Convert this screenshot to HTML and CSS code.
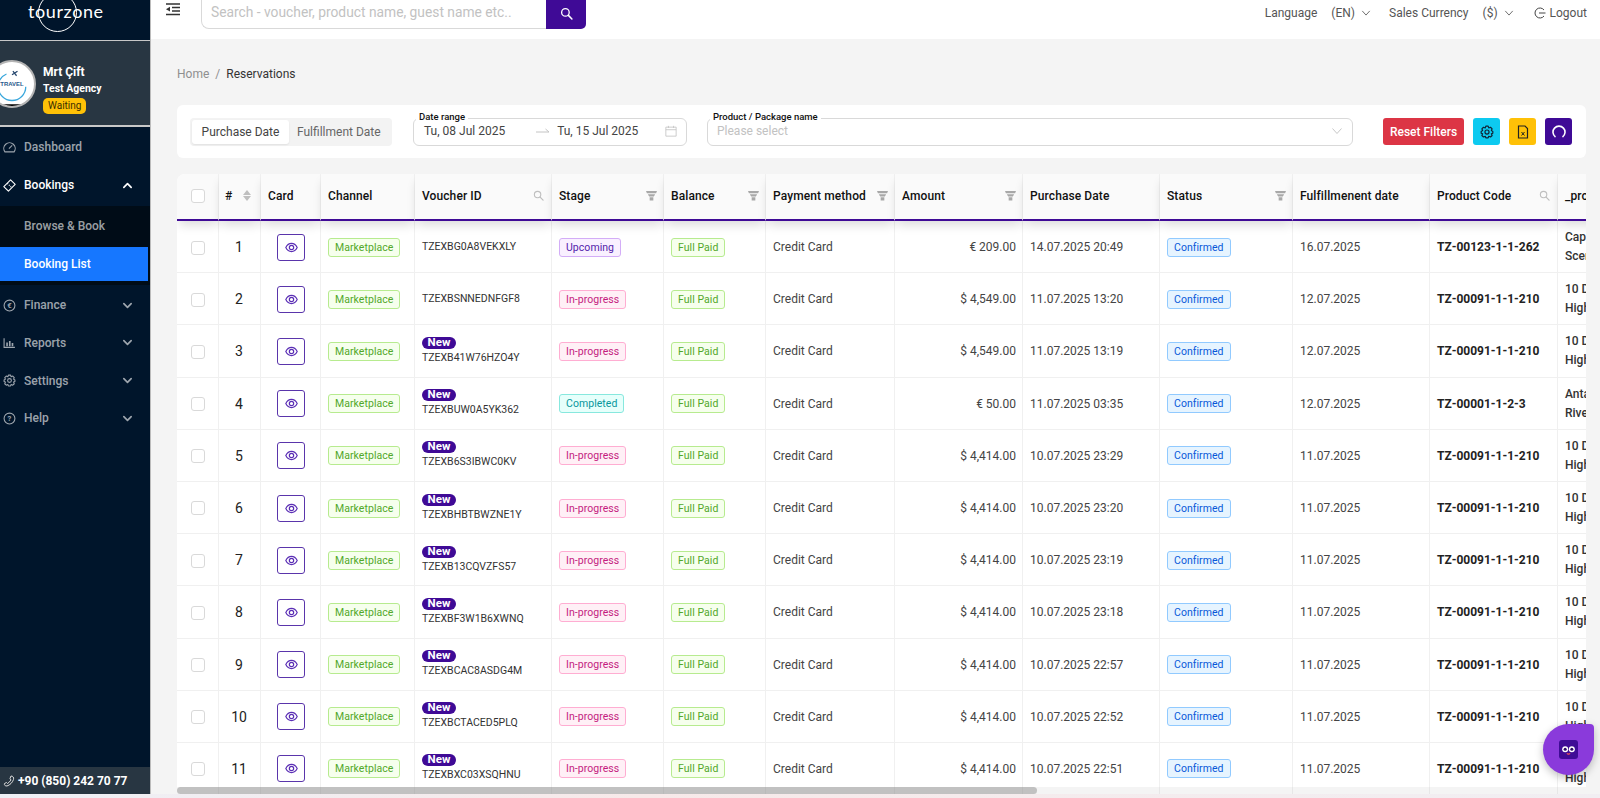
FILE: index.html
```html
<!DOCTYPE html>
<html lang="en">
<head>
<meta charset="utf-8">
<title>Reservations</title>
<link rel="stylesheet" href="styles.css">
</head>
<body>
<svg class="defs" width="0" height="0" aria-hidden="true">
  <symbol id="eye" viewBox="0 0 24 24"><path d="M1.5 12C4 7 8 4.5 12 4.5S20 7 22.5 12C20 17 16 19.5 12 19.5S4 17 1.5 12Z" fill="none" stroke="currentColor" stroke-width="2.2"/><circle cx="12" cy="12" r="4" fill="none" stroke="currentColor" stroke-width="2.2"/></symbol>
  <symbol id="funnel" viewBox="0 0 12 12"><path d="M0 1H12L11 3.6H1ZM2 4.6H10L8.6 7.2H3.4Z" fill="currentColor"/><path d="M4 8H8V11.5H4Z" fill="currentColor"/></symbol>
  <symbol id="lens" viewBox="0 0 24 24"><circle cx="10" cy="10" r="7" fill="none" stroke="currentColor" stroke-width="2.4"/><path d="M15.5 15.5L22 22" stroke="currentColor" stroke-width="2.8" stroke-linecap="round"/></symbol>
  <symbol id="chev" viewBox="0 0 12 12"><path d="M2 4L6 8L10 4" fill="none" stroke="currentColor" stroke-width="1.8" stroke-linecap="round" stroke-linejoin="round"/></symbol>
  <symbol id="chevthin" viewBox="0 0 12 12"><path d="M1.5 3.5L6 8.5L10.5 3.5" fill="none" stroke="currentColor" stroke-width="1"/></symbol>
  <symbol id="gear" viewBox="0 0 24 24"><path d="M10 2H14L15 5L18 3.8L20.8 6.6L19.5 9.5L22 11V14L19.5 15L20.8 18L18 20.6L15 19.3L14 22H10L9 19.3L6 20.6L3.2 18L4.5 15L2 14V11L4.5 9.5L3.2 6.6L6 3.8L9 5Z" fill="none" stroke="currentColor" stroke-width="2" stroke-linejoin="round"/><circle cx="12" cy="12" r="3.5" fill="none" stroke="currentColor" stroke-width="2"/></symbol>
</svg>

<div class="app">
  <aside class="sidebar">
    <div class="logo">
      <span class="logo-text">tourzone</span>
      <span class="logo-ring"></span>
    </div>
    <div class="profile">
      <div class="avatar">
        <svg viewBox="0 0 48 48" width="44" height="44">
          <path d="M25 10L29 15M30 10L24 14" stroke="#26476e" stroke-width="1.4"/>
          <path d="M9 27A15 15 0 0 0 39 27" fill="none" stroke="#3aa7dc" stroke-width="1.4"/>
          <path d="M10 21A15 15 0 0 1 18 13" fill="none" stroke="#3aa7dc" stroke-width="1.2"/>
          <text x="24" y="26" text-anchor="middle" class="avatar-text">TRAVEL</text>
          <path d="M12 46A22 22 0 0 0 36 46Z" fill="#000"/>
        </svg>
      </div>
      <div class="profile-info">
        <div class="profile-name">Mrt Çift</div>
        <div class="profile-agency">Test Agency</div>
        <span class="waiting">Waiting</span>
      </div>
    </div>
    <nav class="menu">
      <div class="menu-item">
        <svg class="menu-icon" viewBox="0 0 24 24"><path d="M3.5 20A10.5 10.5 0 1 1 20.5 20Z" fill="none" stroke="currentColor" stroke-width="2"/><path d="M11 14L17 8" stroke="currentColor" stroke-width="2"/></svg>
        <span>Dashboard</span>
      </div>
      <div class="menu-item is-open">
        <svg class="menu-icon" viewBox="0 0 24 24"><path d="M14 1.5L22.5 10L10 22.5L1.5 14Z" fill="none" stroke="currentColor" stroke-width="2" stroke-linejoin="round"/><path d="M8 8L16 16" stroke="currentColor" stroke-width="2" stroke-dasharray="2 2"/></svg>
        <span>Bookings</span>
        <svg class="menu-chev flip"><use href="#chev"/></svg>
      </div>
      <div class="submenu">
        <div class="sub-item">Browse &amp; Book</div>
        <div class="sub-item is-active">Booking List</div>
      </div>
      <div class="menu-item">
        <svg class="menu-icon" viewBox="0 0 24 24"><circle cx="12" cy="12" r="10" fill="none" stroke="currentColor" stroke-width="2"/><text x="12" y="17" text-anchor="middle" class="euro">€</text></svg>
        <span>Finance</span>
        <svg class="menu-chev"><use href="#chev"/></svg>
      </div>
      <div class="menu-item">
        <svg class="menu-icon" viewBox="0 0 24 24"><path d="M2 4V21H22" fill="none" stroke="currentColor" stroke-width="2"/><path d="M6 12H9V19H6ZM11 9H14V19H11ZM16 13H19V19H16Z" fill="currentColor"/></svg>
        <span>Reports</span>
        <svg class="menu-chev"><use href="#chev"/></svg>
      </div>
      <div class="menu-item">
        <svg class="menu-icon"><use href="#gear"/></svg>
        <span>Settings</span>
        <svg class="menu-chev"><use href="#chev"/></svg>
      </div>
      <div class="menu-item">
        <svg class="menu-icon" viewBox="0 0 24 24"><circle cx="12" cy="12" r="10" fill="none" stroke="currentColor" stroke-width="2"/><text x="12" y="17" text-anchor="middle" class="euro">?</text></svg>
        <span>Help</span>
        <svg class="menu-chev"><use href="#chev"/></svg>
      </div>
    </nav>
    <div class="phone">
      <svg class="phone-icon" viewBox="0 0 24 24"><path d="M16 2C20 2 22 5 21 9C19 15 14 20 8 22C4 22 2 20 3 17L7 15L9 17C12 15 14 13 16 10L14 7Z" fill="none" stroke="currentColor" stroke-width="2" stroke-linejoin="round"/></svg>
      <span>+90 (850) 242 70 77</span>
    </div>
  </aside>

  <div class="main">
    <header class="topbar">
      <svg class="collapse" viewBox="0 0 14 13"><path d="M0 1H14M6 4.5H14M6 8H14M0 11.5H14" stroke="#333" stroke-width="1.3"/><path d="M0 6.2L4 3.8V8.6Z" fill="#333"/></svg>
      <div class="search">
        <div class="search-input">Search - voucher, product name, guest name etc..</div>
        <button class="search-btn" type="button"><svg width="13" height="13"><use href="#lens"/></svg></button>
      </div>
      <div class="top-right">
        <span class="top-label">Language</span>
        <span class="top-value">(EN)</span>
        <svg class="top-chev"><use href="#chevthin"/></svg>
        <span class="top-label gap-l">Sales Currency</span>
        <span class="top-value">($)</span>
        <svg class="top-chev"><use href="#chevthin"/></svg>
        <svg class="logout-icon" viewBox="0 0 24 24"><path d="M20 6A10 10 0 1 0 20 18" fill="none" stroke="#444" stroke-width="2"/><path d="M10 12H23" stroke="#444" stroke-width="2"/></svg>
        <span class="top-label">Logout</span>
      </div>
    </header>

    <div class="content">
      <div class="crumbs"><span class="crumb-home">Home</span><span class="crumb-sep">/</span><span class="crumb-now">Reservations</span></div>

      <section class="filters">
        <div class="segmented">
          <span class="seg seg-on">Purchase Date</span>
          <span class="seg">Fulfillment Date</span>
        </div>
        <div class="field date-field">
          <span class="field-label">Date range</span>
          <span class="date-val">Tu, 08 Jul 2025</span>
          <svg class="date-arrow" viewBox="0 0 14 8"><path d="M0 5H13L9.5 2" fill="none" stroke="#c4c4c4" stroke-width="1"/></svg>
          <span class="date-val">Tu, 15 Jul 2025</span>
          <svg class="date-cal" viewBox="0 0 14 14"><path d="M1 2.5H13V13H1ZM1 5.5H13M4 1V3.5M10 1V3.5" fill="none" stroke="#c4c4c4" stroke-width="1"/></svg>
        </div>
        <div class="field product-field">
          <span class="field-label">Product / Package name</span>
          <span class="placeholder">Please select</span>
          <svg class="select-chev"><use href="#chevthin"/></svg>
        </div>
        <button class="btn btn-red" type="button">Reset Filters</button>
        <button class="btn btn-square btn-cyan" type="button"><svg width="14" height="14"><use href="#gear"/></svg></button>
        <button class="btn btn-square btn-yellow" type="button"><svg width="14" height="14" viewBox="0 0 14 14"><path d="M2.5 1H9L11.5 3.5V13H2.5Z" fill="none" stroke="#222" stroke-width="1.2"/><path d="M5.5 7L8.5 10.5M8.5 7L5.5 10.5" stroke="#222" stroke-width="1"/></svg></button>
        <button class="btn btn-square btn-purple" type="button"><svg width="14" height="14" viewBox="0 0 14 14"><path d="M3.5 12A6 6 0 1 1 10.5 12" fill="none" stroke="#fff" stroke-width="1.6"/></svg></button>
      </section>

      <section class="table-wrap">
        <table class="grid">
          <colgroup><col class="c1"><col class="c2"><col class="c3"><col class="c4"><col class="c5"><col class="c6"><col class="c7"><col class="c8"><col class="c9"><col class="c10"><col class="c11"><col class="c12"><col class="c13"><col class="c14"></colgroup>
          <thead>
            <tr>
              <th><span class="check"></span></th>
              <th class="th-num"><div class="th-in"><span>#</span><span class="sort"><i class="up"></i><i class="down"></i></span></div></th>
              <th>Card</th>
              <th>Channel</th>
              <th><div class="th-in"><span>Voucher ID</span><svg class="th-lens"><use href="#lens"/></svg></div></th>
              <th><div class="th-in"><span>Stage</span><svg class="th-funnel"><use href="#funnel"/></svg></div></th>
              <th><div class="th-in"><span>Balance</span><svg class="th-funnel"><use href="#funnel"/></svg></div></th>
              <th><div class="th-in"><span>Payment method</span><svg class="th-funnel"><use href="#funnel"/></svg></div></th>
              <th><div class="th-in"><span>Amount</span><svg class="th-funnel"><use href="#funnel"/></svg></div></th>
              <th>Purchase Date</th>
              <th><div class="th-in"><span>Status</span><svg class="th-funnel"><use href="#funnel"/></svg></div></th>
              <th>Fulfillmenent date</th>
              <th><div class="th-in"><span>Product Code</span><svg class="th-lens"><use href="#lens"/></svg></div></th>
              <th class="th-clip">_product_name</th>
            </tr>
          </thead>
          <tbody>
            <tr><td class="ctr"><span class="check"></span></td><td class="num">1</td><td class="ctr"><span class="eye-btn"><svg width="13" height="13"><use href="#eye"/></svg></span></td><td><span class="tag green">Marketplace</span></td><td><div class="voucher">TZEXBG0A8VEKXLY</div></td><td><span class="tag purple">Upcoming</span></td><td><span class="tag green">Full Paid</span></td><td>Credit Card</td><td class="amt">€ 209.00</td><td>14.07.2025 20:49</td><td><span class="tag blue">Confirmed</span></td><td>16.07.2025</td><td class="code">TZ-00123-1-1-262</td><td class="pname">Cappadocia<br>Scenic</td></tr>
            <tr><td class="ctr"><span class="check"></span></td><td class="num">2</td><td class="ctr"><span class="eye-btn"><svg width="13" height="13"><use href="#eye"/></svg></span></td><td><span class="tag green">Marketplace</span></td><td><div class="voucher">TZEXBSNNEDNFGF8</div></td><td><span class="tag pink">In-progress</span></td><td><span class="tag green">Full Paid</span></td><td>Credit Card</td><td class="amt">$ 4,549.00</td><td>11.07.2025 13:20</td><td><span class="tag blue">Confirmed</span></td><td>12.07.2025</td><td class="code">TZ-00091-1-1-210</td><td class="pname">10 Days<br>Highlights</td></tr>
            <tr><td class="ctr"><span class="check"></span></td><td class="num">3</td><td class="ctr"><span class="eye-btn"><svg width="13" height="13"><use href="#eye"/></svg></span></td><td><span class="tag green">Marketplace</span></td><td><span class="new">New</span><div class="voucher">TZEXB41W76HZO4Y</div></td><td><span class="tag pink">In-progress</span></td><td><span class="tag green">Full Paid</span></td><td>Credit Card</td><td class="amt">$ 4,549.00</td><td>11.07.2025 13:19</td><td><span class="tag blue">Confirmed</span></td><td>12.07.2025</td><td class="code">TZ-00091-1-1-210</td><td class="pname">10 Days<br>Highlights</td></tr>
            <tr><td class="ctr"><span class="check"></span></td><td class="num">4</td><td class="ctr"><span class="eye-btn"><svg width="13" height="13"><use href="#eye"/></svg></span></td><td><span class="tag green">Marketplace</span></td><td><span class="new">New</span><div class="voucher">TZEXBUW0A5YK362</div></td><td><span class="tag teal">Completed</span></td><td><span class="tag green">Full Paid</span></td><td>Credit Card</td><td class="amt">€ 50.00</td><td>11.07.2025 03:35</td><td><span class="tag blue">Confirmed</span></td><td>12.07.2025</td><td class="code">TZ-00001-1-2-3</td><td class="pname">Antalya<br>River</td></tr>
            <tr><td class="ctr"><span class="check"></span></td><td class="num">5</td><td class="ctr"><span class="eye-btn"><svg width="13" height="13"><use href="#eye"/></svg></span></td><td><span class="tag green">Marketplace</span></td><td><span class="new">New</span><div class="voucher">TZEXB6S3IBWC0KV</div></td><td><span class="tag pink">In-progress</span></td><td><span class="tag green">Full Paid</span></td><td>Credit Card</td><td class="amt">$ 4,414.00</td><td>10.07.2025 23:29</td><td><span class="tag blue">Confirmed</span></td><td>11.07.2025</td><td class="code">TZ-00091-1-1-210</td><td class="pname">10 Days<br>Highlights</td></tr>
            <tr><td class="ctr"><span class="check"></span></td><td class="num">6</td><td class="ctr"><span class="eye-btn"><svg width="13" height="13"><use href="#eye"/></svg></span></td><td><span class="tag green">Marketplace</span></td><td><span class="new">New</span><div class="voucher">TZEXBHBTBWZNE1Y</div></td><td><span class="tag pink">In-progress</span></td><td><span class="tag green">Full Paid</span></td><td>Credit Card</td><td class="amt">$ 4,414.00</td><td>10.07.2025 23:20</td><td><span class="tag blue">Confirmed</span></td><td>11.07.2025</td><td class="code">TZ-00091-1-1-210</td><td class="pname">10 Days<br>Highlights</td></tr>
            <tr><td class="ctr"><span class="check"></span></td><td class="num">7</td><td class="ctr"><span class="eye-btn"><svg width="13" height="13"><use href="#eye"/></svg></span></td><td><span class="tag green">Marketplace</span></td><td><span class="new">New</span><div class="voucher">TZEXB13CQVZFS57</div></td><td><span class="tag pink">In-progress</span></td><td><span class="tag green">Full Paid</span></td><td>Credit Card</td><td class="amt">$ 4,414.00</td><td>10.07.2025 23:19</td><td><span class="tag blue">Confirmed</span></td><td>11.07.2025</td><td class="code">TZ-00091-1-1-210</td><td class="pname">10 Days<br>Highlights</td></tr>
            <tr><td class="ctr"><span class="check"></span></td><td class="num">8</td><td class="ctr"><span class="eye-btn"><svg width="13" height="13"><use href="#eye"/></svg></span></td><td><span class="tag green">Marketplace</span></td><td><span class="new">New</span><div class="voucher">TZEXBF3W1B6XWNQ</div></td><td><span class="tag pink">In-progress</span></td><td><span class="tag green">Full Paid</span></td><td>Credit Card</td><td class="amt">$ 4,414.00</td><td>10.07.2025 23:18</td><td><span class="tag blue">Confirmed</span></td><td>11.07.2025</td><td class="code">TZ-00091-1-1-210</td><td class="pname">10 Days<br>Highlights</td></tr>
            <tr><td class="ctr"><span class="check"></span></td><td class="num">9</td><td class="ctr"><span class="eye-btn"><svg width="13" height="13"><use href="#eye"/></svg></span></td><td><span class="tag green">Marketplace</span></td><td><span class="new">New</span><div class="voucher">TZEXBCAC8ASDG4M</div></td><td><span class="tag pink">In-progress</span></td><td><span class="tag green">Full Paid</span></td><td>Credit Card</td><td class="amt">$ 4,414.00</td><td>10.07.2025 22:57</td><td><span class="tag blue">Confirmed</span></td><td>11.07.2025</td><td class="code">TZ-00091-1-1-210</td><td class="pname">10 Days<br>Highlights</td></tr>
            <tr><td class="ctr"><span class="check"></span></td><td class="num">10</td><td class="ctr"><span class="eye-btn"><svg width="13" height="13"><use href="#eye"/></svg></span></td><td><span class="tag green">Marketplace</span></td><td><span class="new">New</span><div class="voucher">TZEXBCTACED5PLQ</div></td><td><span class="tag pink">In-progress</span></td><td><span class="tag green">Full Paid</span></td><td>Credit Card</td><td class="amt">$ 4,414.00</td><td>10.07.2025 22:52</td><td><span class="tag blue">Confirmed</span></td><td>11.07.2025</td><td class="code">TZ-00091-1-1-210</td><td class="pname">10 Days<br>Highlights</td></tr>
            <tr><td class="ctr"><span class="check"></span></td><td class="num">11</td><td class="ctr"><span class="eye-btn"><svg width="13" height="13"><use href="#eye"/></svg></span></td><td><span class="tag green">Marketplace</span></td><td><span class="new">New</span><div class="voucher">TZEXBXC03XSQHNU</div></td><td><span class="tag pink">In-progress</span></td><td><span class="tag green">Full Paid</span></td><td>Credit Card</td><td class="amt">$ 4,414.00</td><td>10.07.2025 22:51</td><td><span class="tag blue">Confirmed</span></td><td>11.07.2025</td><td class="code">TZ-00091-1-1-210</td><td class="pname">10 Days<br>Highlights</td></tr>
          </tbody>
        </table>
        <div class="hscroll"><div class="hthumb"></div></div>
      </section>
    </div>
  </div>
</div>
<div class="bottom-strip"></div>

<div class="chat-bubble">
  <div class="chat-face">
    <svg width="18" height="12" viewBox="0 0 18 12"><circle cx="5" cy="5" r="3.6" fill="#fff"/><circle cx="13" cy="5" r="3.6" fill="#fff"/><circle cx="5" cy="5" r="1.8" fill="#2a0a66"/><circle cx="13" cy="5" r="1.8" fill="#2a0a66"/><path d="M7 10Q9 12 11 10" stroke="#ff5a4d" stroke-width="1.3" fill="none"/></svg>
  </div>
</div>
</body>
</html>
```
FILE: styles.css
```css
* { box-sizing: border-box; }
html, body { margin: 0; padding: 0; height: 798px; overflow: hidden; }
body { font-family: Roboto, "Liberation Sans", sans-serif; font-size: 12px; color: #333; background: #f4f4f4; }
.defs { position: absolute; }
button { font-family: inherit; border: 0; padding: 0; cursor: pointer; }

.app { display: flex; height: 794px; }

/* Sidebar */
.sidebar { width: 151px; flex: none; background: #00152b; border-right: 1px solid #bcbcbc; display: flex; flex-direction: column; overflow: hidden; }
.logo { position: relative; height: 40px; flex: none; overflow: hidden; }
.logo-text { position: absolute; left: 28px; top: 0; font-family: Lato, sans-serif; font-weight: 400; font-size: 18px; line-height: 22px; color: #fff; letter-spacing: .6px; }
.logo-ring { position: absolute; left: 38px; top: -7px; width: 39px; height: 39px; border: 1.6px solid #fff; border-radius: 50%; }
.profile { height: 87px; flex: none; background: #283642; border-top: 1px solid #c8c8c8; border-bottom: 2px solid #c8c8c8; display: flex; align-items: center; gap: 7px; padding-top: 1px; }
.avatar { width: 48px; height: 48px; margin-left: -12px; flex: none; border-radius: 50%; background: #fff; border: 2px solid #b4b4b4; display: flex; align-items: center; justify-content: center; overflow: hidden; }
.avatar-text { font-family: "Liberation Sans", sans-serif; font-size: 6.5px; font-weight: 700; fill: #2b5a8c; }
.profile-info { display: flex; flex-direction: column; align-items: flex-start; color: #fff; font-weight: 700; margin-top: 10px; }
.profile-name { font-size: 12px; line-height: 18px; }
.profile-agency { font-size: 10.5px; line-height: 15px; }
.waiting { background: #ffc107; color: #3b2f00; font-size: 10px; font-weight: 400; line-height: 16px; border-radius: 5px; padding: 0 5px; margin-top: 2px; }

.menu { flex: 1; padding-top: 3px; }
.menu-item { height: 34px; margin-bottom: 3.7px; display: flex; align-items: center; color: rgba(255,255,255,.62); font-size: 12px; font-weight: 500; padding-left: 3px; }
.menu-item > span { margin-left: 8px; }
.menu-item.is-open { color: #fff; margin-top: 4.3px; margin-bottom: 4px; }
.menu-icon { width: 13px; height: 13px; flex: none; }
.euro { font-family: Roboto, sans-serif; font-size: 14px; font-weight: 700; fill: currentColor; }
.menu-chev { width: 11px; height: 11px; margin-left: auto; margin-right: 17px; }
.flip { transform: rotate(180deg); }
.submenu { background: #000c17; padding: 3px 0 4px; margin-bottom: 3px; }
.sub-item { height: 34px; margin: 0 2px 4px 0; padding-left: 24px; display: flex; align-items: center; color: rgba(255,255,255,.62); font-size: 12px; font-weight: 500; }
.sub-item:last-child { margin-bottom: 0; }
.sub-item.is-active { background: #1677ff; color: #fff; }
.phone { height: 27px; flex: none; background: #283642; display: flex; align-items: center; gap: 3px; padding-left: 3px; color: #fff; font-size: 12px; font-weight: 700; }
.phone-icon { width: 12px; height: 12px; color: #ddd; }

/* Main */
.main { flex: 1; min-width: 0; display: flex; flex-direction: column; }
.topbar { height: 39px; flex: none; background: #fff; display: flex; align-items: flex-end; padding: 0 13px 10px 15px; overflow: hidden; position: relative; }
.collapse { width: 14px; height: 13px; align-self: flex-start; margin-top: 3px; flex: none; }
.search { display: flex; height: 42px; margin-left: 21px; flex: none; }
.search-input { width: 345px; border: 1px solid #d9d9d9; border-right: 0; border-radius: 0 0 0 8px; padding: 14px 0 0 9px; color: #c2c2c2; font-size: 13.8px; line-height: 20px; }
.search-btn { width: 40px; background: #3f0a96; color: #fff; border-radius: 0 0 5px 0; display: flex; align-items: flex-end; justify-content: center; padding-bottom: 9px; }
.top-right { margin-left: auto; align-self: flex-start; height: 26px; display: flex; align-items: center; font-size: 12px; color: #555; }
.top-value { margin-left: 14px; }
.top-chev { width: 10px; height: 10px; margin-left: 6px; color: #555; }
.gap-l { margin-left: 18px; }
.logout-icon { width: 12px; height: 12px; margin: 0 4px 0 20px; }

.content { flex: 1; min-height: 0; padding: 0 14px 0 26px; display: flex; flex-direction: column; }
.crumbs { height: 66px; flex: none; padding-top: 26px; display: flex; gap: 6px; font-size: 12px; line-height: 18px; }
.crumb-home, .crumb-sep { color: #8f8f8f; }
.crumb-now { color: #333; }

.filters { height: 53px; flex: none; background: #fff; border-radius: 6px; display: flex; align-items: center; padding: 0 14px 0 13px; }
.segmented { width: 202px; height: 28px; background: #f3f3f3; border-radius: 4px; display: flex; align-items: center; padding: 2px; flex: none; }
.seg { height: 24px; padding: 0 3px; display: flex; align-items: center; font-size: 12px; color: #666; white-space: nowrap; }
.seg-on { width: 97px; background: #fff; border-radius: 3px; color: #444; box-shadow: 0 1px 2px rgba(0,0,0,.08); justify-content: center; padding: 0; margin-right: 5px; }
.field { position: relative; height: 28px; border: 1px solid #d9d9d9; border-radius: 6px; display: flex; align-items: center; flex: none; }
.field-label { position: absolute; left: 2px; top: -8px; background: #fff; padding: 0 3px; font-size: 9.5px; line-height: 11px; color: #111; font-weight: 500; }
.date-field { width: 274px; margin-left: 21px; padding: 0 0 1px 10px; }
.date-val { font-size: 12px; color: #444; white-space: nowrap; }
.date-arrow { width: 14px; height: 8px; margin: 0 7px 0 31px; flex: none; }
.date-cal { width: 12px; height: 12px; margin-left: auto; margin-right: 9px; }
.product-field { flex: 1; margin-left: 20px; padding: 0 0 1px 9px; min-width: 0; }
.placeholder { color: #c2c2c2; font-size: 12px; }
.select-chev { width: 12px; height: 12px; margin-left: auto; margin-right: 9px; color: #c8c8c8; }
.btn { height: 27px; border-radius: 3px; display: flex; align-items: center; justify-content: center; flex: none; margin-left: 9px; }
.btn-red { width: 81px; margin-left: 30px; background: #dc3545; color: #fff; font-size: 12px; font-weight: 500; }
.btn-square { width: 27px; }
.btn-cyan { background: #0dcaf0; color: #123; }
.btn-yellow { background: #ffc107; }
.btn-purple { background: #3f0a96; }

/* Table */
.table-wrap { position: relative; margin-top: 16px; width: 1409px; flex: 1; min-height: 0; overflow: hidden; background: #fff; border-radius: 8px 0 0 0; }
.grid { border-collapse: separate; border-spacing: 0; table-layout: fixed; width: 1581px; }
.c1 { width: 42px; } .c2 { width: 42px; } .c3 { width: 60px; } .c4 { width: 94px; } .c5 { width: 137px; } .c6 { width: 112px; } .c7 { width: 102px; } .c8 { width: 129px; } .c9 { width: 128px; } .c10 { width: 137px; } .c11 { width: 133px; } .c12 { width: 137px; } .c13 { width: 128px; } .c14 { width: 200px; }
.grid th { height: 47px; background: #fafafa; border-bottom: 2px solid #3f0a96; border-right: 1px solid #f0f0f0; padding: 0 8px 2px 7px; text-align: left; font-size: 12px; font-weight: 500; letter-spacing: .1px; color: #111; white-space: nowrap; overflow: hidden; box-shadow: 0 6px 10px -2px rgba(0,0,0,.14); position: relative; z-index: 1; }
.grid th:first-child { text-align: center; padding: 0 0 2px 1px; }
.grid th.th-num { padding-left: 6px; }
.th-in { display: flex; align-items: center; justify-content: space-between; }
.th-lens { width: 11px; height: 11px; color: #bfbfbf; margin-right: -1px; flex: none; }
.th-funnel { width: 11px; height: 11px; color: #a8a8a8; margin-right: -2px; flex: none; }
.sort { display: flex; flex-direction: column; gap: 1px; margin-right: 1px; }
.sort i { display: block; width: 0; height: 0; border-left: 4px solid transparent; border-right: 4px solid transparent; }
.sort .up { border-bottom: 5px solid #bfbfbf; }
.sort .down { border-top: 5px solid #bfbfbf; }
.grid td { height: 52.2px; padding: 1px 8px 0 7px; border-bottom: 1px solid #f0f0f0; border-right: 1px solid #f0f0f0; background: #fff; color: #444; font-size: 12px; white-space: nowrap; overflow: hidden; vertical-align: middle; }
.grid td.ctr { text-align: center; padding: 1px 0 0 1px; }
.grid td.num { text-align: center; padding: 1px 1px 0 0; font-size: 14px; color: #222; }
.grid td.amt { text-align: right; padding-right: 6px; }
.grid td.code { font-weight: 700; color: #222; }
.grid td.pname { font-weight: 500; color: #333; line-height: 19px; }
.check { display: inline-block; width: 14px; height: 14px; border: 1px solid #d9d9d9; border-radius: 3px; background: #fff; vertical-align: middle; }
.eye-btn { display: inline-flex; width: 28px; height: 27px; border: 1px solid #5a35ab; border-radius: 3px; align-items: center; justify-content: center; color: #5b2fb5; vertical-align: middle; }
.tag { display: inline-block; height: 19px; line-height: 17px; border: 1px solid; border-radius: 3px; padding: 0 6px; font-size: 10.5px; letter-spacing: .05px; vertical-align: middle; }
.green { background: #f6ffed; border-color: #b7eb8f; color: #52a82a; }
.purple { background: #f9f0ff; border-color: #d3adf7; color: #531dab; }
.pink { background: #fff0f6; border-color: #ffadd2; color: #c41d7f; }
.teal { background: #e6fffb; border-color: #87e8de; color: #08979c; }
.blue { background: #e6f4ff; border-color: #91caff; color: #0958d9; }
.new { display: block; width: 34px; height: 12px; margin-top: -1px; border-radius: 6px; background: #3f0a96; color: #fff; font-size: 11.5px; font-weight: 700; line-height: 11px; text-align: center; }
.voucher { font-size: 10.5px; color: #333; line-height: 14px; }
.new + .voucher { margin-top: 2px; }
.hscroll { position: absolute; left: 0; right: 0; bottom: 0; height: 7px; background: rgba(180,180,180,.15); z-index: 2; }
.hthumb { width: 860px; height: 7px; background: rgba(130,130,130,.45); border-radius: 4px; }

.bottom-strip { height: 4px; background: linear-gradient(90deg, #eef0f6, #f7e9e9 40%, #f1eef2); }

.chat-bubble { position: fixed; left: 1543px; top: 724px; width: 51px; height: 51px; border-radius: 50% 4px 50% 50%; background: #8a3adb; box-shadow: 0 3px 8px rgba(0,0,0,.25); display: flex; align-items: center; justify-content: center; z-index: 5; }
.chat-face { width: 19px; height: 19px; border-radius: 3px; background: #3f0c96; display: flex; align-items: center; justify-content: center; }
.chat-face svg { width: 15px; height: 10px; }
```
